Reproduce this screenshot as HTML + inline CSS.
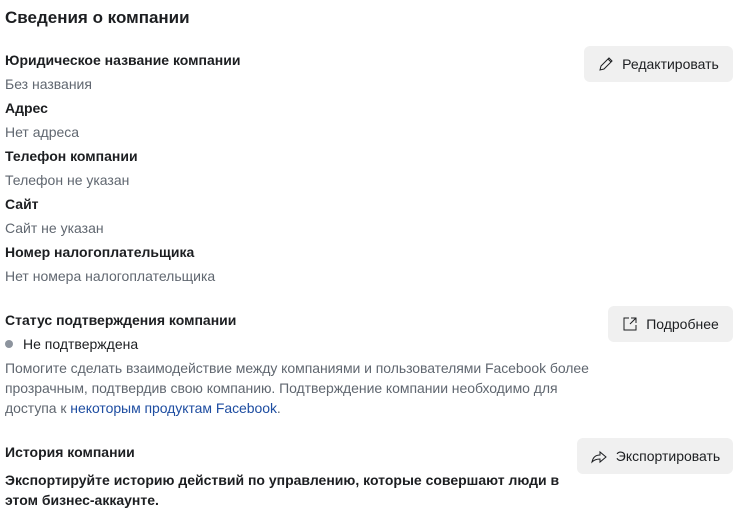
<!DOCTYPE html>
<html><head><meta charset="utf-8"><style>
body{margin:0;width:747px;height:514px;background:#fff;font-family:"Liberation Sans",Arial,sans-serif;color:#1c1e21;position:relative;overflow:hidden}
.t{position:absolute;left:5px;white-space:nowrap;line-height:20px}
.h{font-size:17px;font-weight:bold;top:8px}
.b{font-size:14px;font-weight:bold}
.g{font-size:14px;color:#606770}
.btn{position:absolute;background:#f0f0f0;border-radius:6px;height:36px;font-size:14px;color:#1c1e21;display:flex;align-items:center;justify-content:center;gap:8px;box-sizing:border-box}
a{color:#1e4da1;text-decoration:none}
</style></head><body>
<div class="t h">Сведения о компании</div>
<div class="t b" style="top:50px">Юридическое название компании</div>
<div class="t g" style="top:74px">Без названия</div>
<div class="t b" style="top:98px">Адрес</div>
<div class="t g" style="top:122px">Нет адреса</div>
<div class="t b" style="top:146px">Телефон компании</div>
<div class="t g" style="top:170px">Телефон не указан</div>
<div class="t b" style="top:194px">Сайт</div>
<div class="t g" style="top:218px">Сайт не указан</div>
<div class="t b" style="top:242px">Номер налогоплательщика</div>
<div class="t g" style="top:266px">Нет номера налогоплательщика</div>
<div class="t b" style="top:310px">Статус подтверждения компании</div>
<div class="t" style="top:334px;font-size:14px"><span style="display:inline-block;width:8px;height:8px;border-radius:50%;background:#8d949e;margin-right:10px;vertical-align:1px"></span>Не подтверждена</div>
<div class="t g" style="top:358px;line-height:20px;letter-spacing:-0.05px">Помогите сделать взаимодействие между компаниями и пользователями Facebook более<br>прозрачным, подтвердив свою компанию. Подтверждение компании необходимо для<br>доступа к <a>некоторым продуктам Facebook</a>.</div>
<div class="t b" style="top:442px">История компании</div>
<div class="t b" style="top:470px">Экспортируйте историю действий по управлению, которые совершают люди в<br>этом бизнес-аккаунте.</div>
<div class="btn" style="left:584px;top:46px;width:149px"><svg width="16" height="16" viewBox="0 0 16 16" fill="none" stroke="#1c1e21" stroke-width="1"><path d="M2 14l1-4 8-8 3 3-8 8z M10 3l3 3"/></svg>Редактировать</div>
<div class="btn" style="left:608px;top:306px;width:125px"><svg width="16" height="16" viewBox="0 0 16 16" fill="none" stroke="#1c1e21" stroke-width="1"><path d="M7 2H2v12h12V9 M9 2h5v5 M14 2L8 8"/></svg>Подробнее</div>
<div class="btn" style="left:577px;top:438px;width:156px"><svg width="18" height="16" viewBox="0 0 18 16" fill="none" stroke="#1c1e21" stroke-width="1"><path d="M2 14c1-5 4-7 8-7V4l6 5-6 5v-3c-3 0-6 1-8 3z"/></svg>Экспортировать</div>
</body></html>
